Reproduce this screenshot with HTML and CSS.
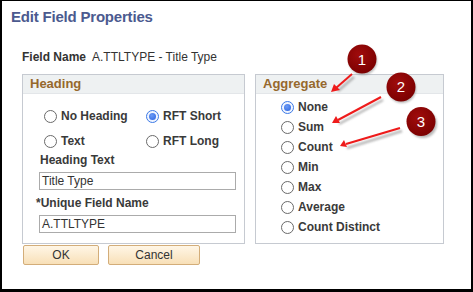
FILE: index.html
```html
<!DOCTYPE html>
<html>
<head>
<meta charset="utf-8">
<link rel="stylesheet" href="styles.css">
</head>
<body>
<div class="dialog">
  <h1 class="title">Edit Field Properties</h1>
  <div class="field-row"><span class="field-label">Field Name</span><span class="field-value">A.TTLTYPE - Title Type</span></div>
  <div class="panels">
    <section class="box box-heading">
      <div class="box-head">Heading</div>
      <div class="heading-body">
        <div class="radio-grid">
          <label class="opt"><span class="radio"></span>No Heading</label>
          <label class="opt"><span class="radio checked"></span>RFT Short</label>
          <label class="opt"><span class="radio"></span>Text</label>
          <label class="opt"><span class="radio"></span>RFT Long</label>
        </div>
        <div class="lbl">Heading Text</div>
        <div class="input">Title Type</div>
        <div class="lbl lbl-req">*Unique Field Name</div>
        <div class="input">A.TTLTYPE</div>
      </div>
    </section>
    <section class="box box-agg">
      <div class="box-head">Aggregate</div>
      <div class="agg-body">
        <label class="opt"><span class="radio checked"></span>None</label>
        <label class="opt"><span class="radio"></span>Sum</label>
        <label class="opt"><span class="radio"></span>Count</label>
        <label class="opt"><span class="radio"></span>Min</label>
        <label class="opt"><span class="radio"></span>Max</label>
        <label class="opt"><span class="radio"></span>Average</label>
        <label class="opt"><span class="radio"></span>Count Distinct</label>
      </div>
    </section>
  </div>
  <div class="buttons">
    <button class="btn btn-ok">OK</button>
    <button class="btn btn-cancel">Cancel</button>
  </div>
  <svg class="annot" width="473" height="292" viewBox="0 0 473 292">
    <defs>
      <radialGradient id="rg" cx="0.4" cy="0.35" r="0.7">
        <stop offset="0" stop-color="#a00c0c"/>
        <stop offset="1" stop-color="#7a0000"/>
      </radialGradient>
      <filter id="blur" x="-20%" y="-20%" width="140%" height="140%"><feGaussianBlur stdDeviation="1.2"/></filter>
    </defs>
    <g class="shadows" filter="url(#blur)" stroke="#888" stroke-width="2.5" fill="#888" opacity="0.6">
      <line x1="354" y1="77" x2="338" y2="91"/>
      <line x1="383" y1="100" x2="339" y2="124"/>
      <line x1="402" y1="131" x2="347" y2="148"/>
      <circle cx="363" cy="61" r="14" stroke="none"/>
      <circle cx="402" cy="89" r="14" stroke="none"/>
      <circle cx="423" cy="124" r="14" stroke="none"/>
    </g>
    <g stroke="#ee1b1b" stroke-width="2" fill="#ee1b1b">
      <line x1="352" y1="74" x2="336" y2="88"/>
      <polygon points="331,92 334,84 340,90" stroke="none"/>
      <line x1="381" y1="97" x2="338" y2="120"/>
      <polygon points="332,123 336,116 340,123" stroke="none"/>
      <line x1="400" y1="128" x2="346" y2="144"/>
      <polygon points="340,146 344,140 347,147" stroke="none"/>
    </g>
    <circle cx="362" cy="59" r="14.5" fill="url(#rg)"/>
    <circle cx="401" cy="87" r="14.5" fill="url(#rg)"/>
    <circle cx="421" cy="121.5" r="14.5" fill="url(#rg)"/>
    <text x="362" y="64.5" class="num">1</text>
    <text x="401" y="92" class="num">2</text>
    <text x="421" y="126.5" class="num">3</text>
  </svg>
</div>
</body>
</html>
```
FILE: styles.css
```css
html, body {
  margin: 0;
  padding: 0;
  background: #fff;
}
.dialog {
  position: relative;
  width: 473px;
  height: 292px;
  box-sizing: border-box;
  border-style: solid;
  border-color: #000;
  border-width: 1px 2px 3px 2px;
  background: #fff;
  font-family: "Liberation Sans", Arial, sans-serif;
  color: #333;
  overflow: hidden;
}
.title {
  margin: 0;
  padding: 7px 0 0 9px;
  font-size: 15px;
  line-height: 18px;
  font-weight: bold;
  letter-spacing: -0.2px;
  color: #4b5a8f;
}
.field-row {
  margin-top: 24px;
  padding-left: 20px;
  font-size: 12px;
  line-height: 14px;
  display: flex;
  gap: 6px;
}
.field-label {
  font-weight: bold;
}
.panels {
  margin-top: 10px;
  padding-left: 20px;
  display: flex;
  gap: 10px;
  height: 170px;
}
.box {
  border: 1px solid #c6cad1;
  box-sizing: border-box;
  background: #fff;
}
.box-heading {
  width: 223px;
}
.box-agg {
  width: 189px;
}
.box-head {
  background: #eef1f2;
  border-bottom: 1px solid #e3e6e9;
  padding: 1px 0 1px 7px;
  font-size: 13px;
  line-height: 16px;
  font-weight: bold;
  color: #96682c;
}
.heading-body {
  padding: 10px 0 0 16px;
}
.radio-grid {
  display: grid;
  grid-template-columns: 102px auto;
  grid-auto-rows: 24px;
  row-gap: 1px;
  padding-left: 5px;
}
.opt {
  display: flex;
  align-items: center;
  gap: 4px;
  font-size: 12px;
  font-weight: bold;
  color: #3a3a3a;
}
.radio {
  width: 13px;
  height: 13px;
  box-sizing: border-box;
  border: 1px solid #6a6a6a;
  border-radius: 50%;
  background: #fff;
  display: flex;
  align-items: center;
  justify-content: center;
  flex: none;
}
.radio.checked {
  border-color: #3c7ae6;
  background: #f0f5ff;
}
.radio.checked::after {
  content: "";
  width: 7px;
  height: 7px;
  border-radius: 50%;
  background: radial-gradient(circle at 40% 35%, #6a9af5, #2a63e0);
}
.lbl {
  font-size: 12px;
  line-height: 14px;
  font-weight: bold;
  color: #3a3a3a;
  padding-left: 1px;
}
.lbl-req {
  margin-top: 6px;
  margin-left: -4px;
}
.input {
  margin-top: 5px;
  width: 197px;
  height: 18px;
  box-sizing: border-box;
  border: 1px solid #ababab;
  font-size: 12px;
  line-height: 16px;
  padding-left: 2px;
  color: #333;
}
.agg-body {
  padding: 3px 0 0 25px;
  display: flex;
  flex-direction: column;
}
.agg-body .opt {
  height: 20px;
}
.buttons {
  margin-top: 1px;
  padding-left: 21px;
  display: flex;
  gap: 9px;
}
.btn {
  height: 20px;
  padding: 0;
  margin: 0;
  border: 1px solid #d3ad79;
  border-radius: 2px;
  background: linear-gradient(#fff6e6, #f8e0b8);
  font-family: "Liberation Sans", Arial, sans-serif;
  font-size: 12px;
  color: #333;
}
.btn-ok {
  width: 76px;
}
.btn-cancel {
  width: 92px;
}
.annot {
  position: absolute;
  left: -2px;
  top: -1px;
  pointer-events: none;
}
.num {
  fill: #fff;
  font-family: "Liberation Sans", Arial, sans-serif;
  font-size: 15px;
  text-anchor: middle;
}
```
